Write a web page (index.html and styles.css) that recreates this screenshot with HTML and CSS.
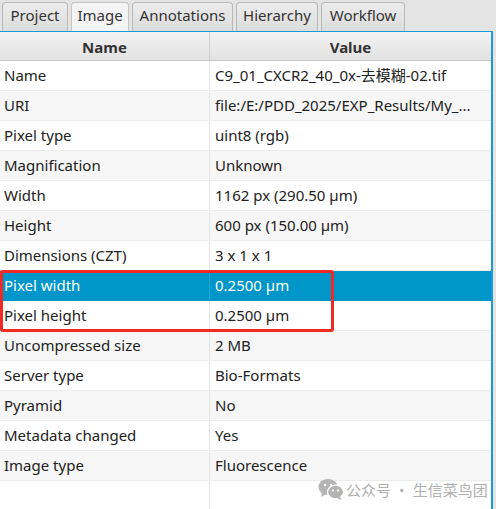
FILE: index.html
```html
<!DOCTYPE html>
<html>
<head>
<meta charset="utf-8">
<link rel="stylesheet" href="styles.css">
</head>
<body>
<div class="app">
  <div class="tabs">
    <div class="tab t1">Project</div>
    <div class="tab t2 active">Image</div>
    <div class="tab t3">Annotations</div>
    <div class="tab t4">Hierarchy</div>
    <div class="tab t5">Workflow</div>
  </div>
  <div class="panel">
    <div class="table">
      <div class="head">
        <div class="hcell name">Name</div>
        <div class="hcell value">Value</div>
      </div>
      <div class="rows">
        <div class="row"><div class="cell name">Name</div><div class="cell value">C9_01_CXCR2_40_0x-去模糊-02.tif</div></div>
        <div class="row alt"><div class="cell name">URI</div><div class="cell value">file:/E:/PDD_2025/EXP_Results/My_...</div></div>
        <div class="row"><div class="cell name">Pixel type</div><div class="cell value">uint8 (rgb)</div></div>
        <div class="row alt"><div class="cell name">Magnification</div><div class="cell value">Unknown</div></div>
        <div class="row"><div class="cell name">Width</div><div class="cell value">1162 px (290.50 µm)</div></div>
        <div class="row alt"><div class="cell name">Height</div><div class="cell value">600 px (150.00 µm)</div></div>
        <div class="row"><div class="cell name">Dimensions (CZT)</div><div class="cell value">3 x 1 x 1</div></div>
        <div class="row selected"><div class="cell name">Pixel width</div><div class="cell value">0.2500 µm</div></div>
        <div class="row"><div class="cell name">Pixel height</div><div class="cell value">0.2500 µm</div></div>
        <div class="row alt"><div class="cell name">Uncompressed size</div><div class="cell value">2 MB</div></div>
        <div class="row"><div class="cell name">Server type</div><div class="cell value">Bio-Formats</div></div>
        <div class="row alt"><div class="cell name">Pyramid</div><div class="cell value">No</div></div>
        <div class="row"><div class="cell name">Metadata changed</div><div class="cell value">Yes</div></div>
        <div class="row alt"><div class="cell name">Image type</div><div class="cell value">Fluorescence</div></div>
        <div class="row filler"><div class="cell name"></div><div class="cell value"></div></div>
        <div class="highlight"></div>
      </div>
      <div class="watermark">
        <svg class="wx" width="26" height="22" viewBox="0 0 26 22">
          <ellipse cx="10" cy="9" rx="9.5" ry="8" fill="#b4b4b4"/>
          <path d="M4 15 L3 19 L8 16 Z" fill="#b4b4b4"/>
          <ellipse cx="17.5" cy="14" rx="8" ry="6.8" fill="#b4b4b4" stroke="#fff" stroke-width="1.2"/>
          <path d="M22 19 L23.5 22 L19 20 Z" fill="#b4b4b4"/>
          <circle cx="7" cy="7" r="1.3" fill="#fff"/>
          <circle cx="13" cy="7" r="1.3" fill="#fff"/>
          <circle cx="15" cy="12.5" r="1.1" fill="#fff"/>
          <circle cx="20" cy="12.5" r="1.1" fill="#fff"/>
        </svg>
        <span>公众号 · 生信菜鸟团</span>
      </div>
    </div>
  </div>
</div>
</body>
</html>
```

FILE: styles.css
```css
* { box-sizing: border-box; }
html, body { margin: 0; padding: 0; }
body {
  width: 496px;
  height: 509px;
  overflow: hidden;
  background: #e4e4e4;
  font-family: "Noto Sans", "Open Sans", "Noto Sans CJK SC", sans-serif;
  font-size: 15px;
  color: #222;
}
.app { display: flex; flex-direction: column; height: 509px; }
.tabs {
  display: flex;
  align-items: flex-end;
  gap: 3px;
  height: 31px;
  padding-left: 2px;
  background: #e4e4e4;
}
.tab {
  height: 29px;
  padding-bottom: 3px;
  display: flex;
  align-items: center;
  justify-content: center;
  border: 1px solid #b8b8b8;
  border-bottom: none;
  border-radius: 4px 4px 0 0;
  background: linear-gradient(#ececec, #dcdcdc);
  color: #333;
  font-size: 15px;
  line-height: 1;
  white-space: nowrap;
}
.t1 { width: 66px; }
.t2 { width: 58px; }
.t3 { width: 101px; }
.t4 { width: 82px; }
.t5 { width: 84px; }
.tab.active {
  background: #f4f4f4;
  border-color: #c4c4c4;
}
.panel {
  flex: 1;
  display: flex;
  padding-right: 3px;
  background: #e4e4e4;
}
.table {
  position: relative;
  flex: 1;
  display: flex;
  flex-direction: column;
  border-top: 1px solid #1a9ad6;
  border-right: 2px solid #1a9ad6;
  background: #fff;
}
.head {
  display: flex;
  height: 29px;
  background: linear-gradient(#f2f2f2, #e2e2e2);
  border-bottom: 1px solid #c8c8c8;
}
.hcell {
  display: flex;
  align-items: center;
  justify-content: center;
  font-weight: bold;
  font-size: 15px;
  color: #333;
  padding-top: 1px;
}
.hcell.name { width: 210px; border-right: 1px solid #cfcfcf; }
.hcell.value { flex: 1; }
.rows { position: relative; flex: 1; display: flex; flex-direction: column; }
.row {
  display: flex;
  height: 30px;
  background: #fff;
  border-bottom: 1px solid #ececec;
}
.row.alt { background: #f6f6f6; }
.row.selected { background: #0096c9; color: #fff; border-bottom-color: #0096c9; }
.row.filler { flex: 1; border-bottom: none; }
.cell {
  display: flex;
  align-items: center;
  white-space: nowrap;
  overflow: hidden;
  padding-bottom: 2px;
}
.cell.name { width: 210px; padding-left: 4px; border-right: 1px solid #e6e6e6; }
.row.selected .cell.name { border-right-color: #24a6d3; }
.cell.value { flex: 1; padding-left: 5px; }
.highlight {
  position: absolute;
  left: 0;
  top: 209px;
  width: 334px;
  height: 62px;
  border: 3px solid #ef2a24;
  border-radius: 3px;
}
.watermark {
  position: absolute;
  left: 318px;
  top: 446px;
  display: flex;
  align-items: center;
  gap: 2px;
  color: #b0b0b0;
  font-family: "Noto Sans CJK SC", sans-serif;
  font-size: 15px;
  white-space: nowrap;
}
```
